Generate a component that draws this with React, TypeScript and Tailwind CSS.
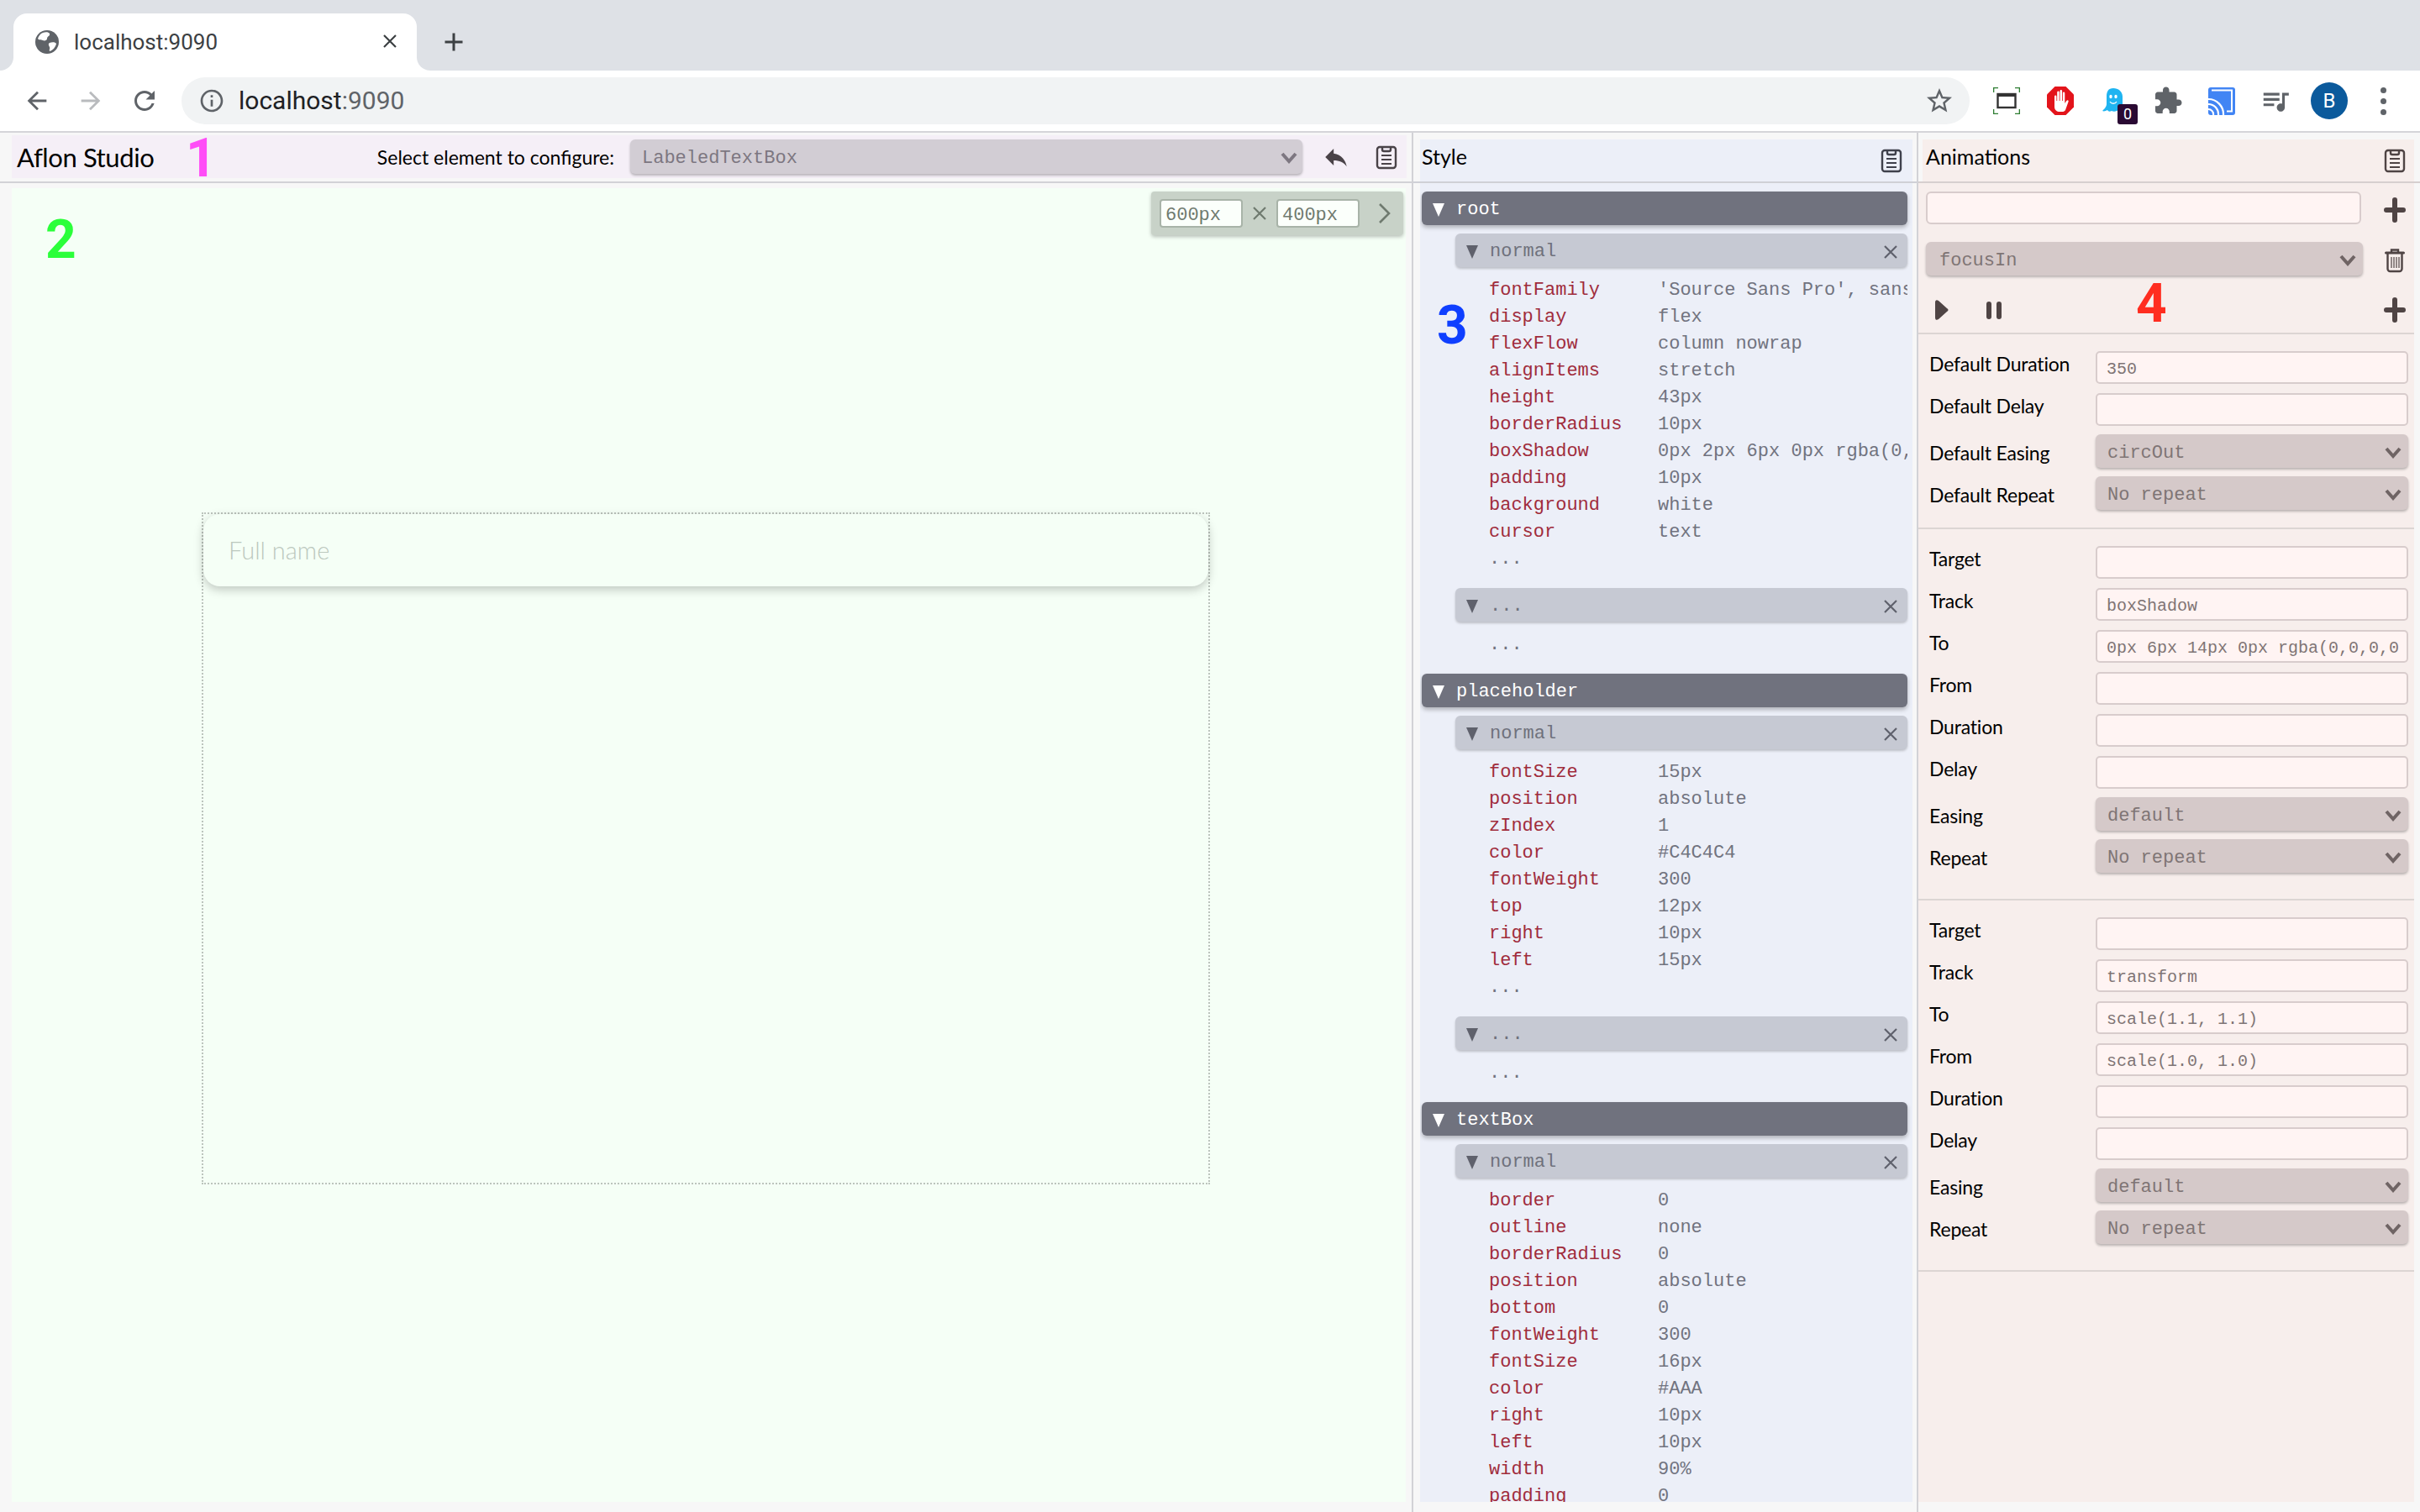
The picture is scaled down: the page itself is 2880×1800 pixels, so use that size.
import type { ReactNode } from 'react';

type Prop = [string, string];

const rootProps: Prop[] = [
    ['fontFamily', "'Source Sans Pro', sans-serif"],
    ['display', 'flex'],
    ['flexFlow', 'column nowrap'],
    ['alignItems', 'stretch'],
    ['height', '43px'],
    ['borderRadius', '10px'],
    ['boxShadow', '0px 2px 6px 0px rgba(0,0,0,0.3)'],
    ['padding', '10px'],
    ['background', 'white'],
    ['cursor', 'text'],
    ['...', ''],
];

const placeholderProps: Prop[] = [
    ['fontSize', '15px'],
    ['position', 'absolute'],
    ['zIndex', '1'],
    ['color', '#C4C4C4'],
    ['fontWeight', '300'],
    ['top', '12px'],
    ['right', '10px'],
    ['left', '15px'],
    ['...', ''],
];

const textBoxProps: Prop[] = [
    ['border', '0'],
    ['outline', 'none'],
    ['borderRadius', '0'],
    ['position', 'absolute'],
    ['bottom', '0'],
    ['fontWeight', '300'],
    ['fontSize', '16px'],
    ['color', '#AAA'],
    ['right', '10px'],
    ['left', '10px'],
    ['width', '90%'],
    ['padding', '0'],
];

type Field = { label: string; value?: string; select?: boolean };

const defaultsFields: Field[] = [
    { label: 'Default Duration', value: '350' },
    { label: 'Default Delay' },
    { label: 'Default Easing', value: 'circOut', select: true },
    { label: 'Default Repeat', value: 'No repeat', select: true },
];

const shadowFields: Field[] = [
    { label: 'Target' },
    { label: 'Track', value: 'boxShadow' },
    { label: 'To', value: '0px 6px 14px 0px rgba(0,0,0,0.3)' },
    { label: 'From' },
    { label: 'Duration' },
    { label: 'Delay' },
    { label: 'Easing', value: 'default', select: true },
    { label: 'Repeat', value: 'No repeat', select: true },
];

const scaleFields: Field[] = [
    { label: 'Target' },
    { label: 'Track', value: 'transform' },
    { label: 'To', value: 'scale(1.1, 1.1)' },
    { label: 'From', value: 'scale(1.0, 1.0)' },
    { label: 'Duration' },
    { label: 'Delay' },
    { label: 'Easing', value: 'default', select: true },
    { label: 'Repeat', value: 'No repeat', select: true },
];

function Material({ d, size = 28, className = '' }: { d: string; size?: number; className?: string }) {
    return (
        <svg width={size} height={size} viewBox="0 0 24 24" fill="currentColor" className={className}>
            <path d={d} />
        </svg>
    );
}

function ToolbarSlot({ children }: { children: ReactNode }) {
    return <div className="relative flex h-[56px] w-[64px] shrink-0 items-center justify-center">{children}</div>;
}

function ClipboardIcon({ color }: { color: string }) {
    return (
        <svg width="26" height="30" viewBox="0 0 26 30" fill="none" stroke={color} strokeWidth="2.4">
            <rect x="2" y="3" width="22" height="25" rx="3" />
            <path d="M8 3v3a2 2 0 0 0 2 2h6a2 2 0 0 0 2-2V3" />
            <path d="M7 13h12M7 18h12M7 23h12" strokeWidth="2" />
        </svg>
    );
}

function PlusIcon() {
    return (
        <svg width="26" height="30" viewBox="0 0 26 30" fill="none" stroke="#4f4444" strokeWidth="6" strokeLinecap="round">
            <path d="M13 3v24M3 15h20" />
        </svg>
    );
}

function TrashIcon() {
    return (
        <svg width="24" height="30" viewBox="0 0 24 30" fill="none" stroke="#4f4444" strokeWidth="2.4">
            <path d="M8 5V2.5h8V5" />
            <path d="M1.5 6h21" strokeWidth="3" strokeLinecap="round" />
            <path d="M3.5 7v18a3 3 0 0 0 3 3h11a3 3 0 0 0 3-3V7" />
            <path d="M8 11v13M11 11v13M14 11v13M17 11v13" strokeWidth="1.2" />
        </svg>
    );
}

function Chevron({ color }: { color: string }) {
    return (
        <svg width="20" height="14" viewBox="0 0 20 14" fill="none" stroke={color} strokeWidth="4">
            <path d="M2 2l8 9 8-9" />
        </svg>
    );
}

function Triangle({ color }: { color: string }) {
    return (
        <svg width="14" height="16" viewBox="0 0 14 16" fill={color}>
            <path d="M0 0h14L7 16z" />
        </svg>
    );
}

function CloseIcon({ color, size = 16 }: { color: string; size?: number }) {
    return (
        <svg width={size} height={size} viewBox="0 0 16 16" fill="none" stroke={color} strokeWidth="2.2">
            <path d="M1 1l14 14M15 1L1 15" />
        </svg>
    );
}

function BrowserChrome() {
    return (
        <div className="font-[Roboto,sans-serif]">
            <div className="flex h-[84px] bg-[#dee1e6] pl-4 pt-4">
                <div className="relative flex h-[68px] w-[480px] items-center rounded-t-2xl bg-white pl-[26px] text-[#3c4043]">
                    <div className="absolute -left-4 bottom-0 h-4 w-4 bg-white">
                        <div className="h-4 w-4 rounded-br-2xl bg-[#dee1e6]" />
                    </div>
                    <div className="absolute -right-4 bottom-0 h-4 w-4 bg-white">
                        <div className="h-4 w-4 rounded-bl-2xl bg-[#dee1e6]" />
                    </div>
                    <svg width="28" height="28" viewBox="0 0 28 28">
                        <circle cx="14" cy="14" r="14" fill="#5f6368" />
                        <path d="M9 3c3-1 7-1 8 1 1 3-3 3-3 6 0 2-3 3-5 2-2-1-5 0-6-2 1-3 3-6 6-7zM17 15c3-1 7-1 8 1-1 4-4 8-8 9-1-2 1-3 0-5-1-2-2-4 0-5z" fill="#fff" />
                    </svg>
                    <span className="ml-[18px] text-[26px] leading-none">localhost:9090</span>
                    <div className="absolute right-[24px] top-[25px]">
                        <CloseIcon color="#3c4043" size={16} />
                    </div>
                </div>
                <div className="ml-4 flex h-[68px] w-[56px] items-center justify-center text-[#3c4043]">
                    <Material size={36} d="M19 13h-6v6h-2v-6H5v-2h6V5h2v6h6v2z" />
                </div>
            </div>
            <div className="flex h-[72px] items-center bg-white pl-[12px]">
                <ToolbarSlot>
                    <Material size={34} className="text-[#5f6368]" d="M20 11H7.83l5.59-5.59L12 4l-8 8 8 8 1.41-1.41L7.83 13H20v-2z" />
                </ToolbarSlot>
                <ToolbarSlot>
                    <Material size={34} className="text-[#b9bbbe]" d="M12 4l-1.41 1.41L16.17 11H4v2h12.17l-5.58 5.59L12 20l8-8z" />
                </ToolbarSlot>
                <ToolbarSlot>
                    <Material size={36} className="text-[#5f6368]" d="M17.65 6.35C16.2 4.9 14.21 4 12 4c-4.42 0-7.99 3.58-7.99 8s3.57 8 7.99 8c3.73 0 6.84-2.55 7.73-6h-2.08c-.82 2.33-3.04 4-5.65 4-3.31 0-6-2.69-6-6s2.69-6 6-6c1.66 0 3.14.69 4.22 1.78L13 11h7V4l-2.35 2.35z" />
                </ToolbarSlot>
                <div className="ml-[12px] flex h-[56px] w-[2128px] shrink-0 items-center rounded-full bg-[#f1f3f4] pl-[20px] pr-[18px]">
                    <Material size={32} className="text-[#5f6368]" d="M11 7h2v2h-2zm0 4h2v6h-2zm1-9C6.48 2 2 6.48 2 12s4.48 10 10 10 10-4.48 10-10S17.52 2 12 2zm0 18c-4.41 0-8-3.59-8-8s3.59-8 8-8 8 3.59 8 8-3.59 8-8 8z" />
                    <span className="ml-[16px] text-[30px] leading-none text-[#202124]">
                        localhost<span className="text-[#5f6368]">:9090</span>
                    </span>
                    <Material size={36} className="ml-auto text-[#5f6368]" d="M22 9.24l-7.19-.62L12 2 9.19 8.63 2 9.24l5.46 4.73L5.82 21 12 17.27 18.18 21l-1.63-7.03L22 9.24zM12 15.4l-3.76 2.27 1-4.28-3.32-2.88 4.38-.38L12 6.1l1.71 4.04 4.38.38-3.32 2.88 1 4.28L12 15.4z" />
                </div>
                <div className="ml-[12px] flex">
                    <ToolbarSlot>
                        <svg width="32" height="32" viewBox="0 0 32 32" fill="none">
                            <path d="M0 6V0h6M26 0h6v6M32 26v6h-6M6 32H0v-6" stroke="#2e7d32" strokeWidth="2.6" />
                            <rect x="5.5" y="8" width="21" height="16" stroke="#333" strokeWidth="2.4" />
                            <path d="M5 9h22" stroke="#333" strokeWidth="4" />
                        </svg>
                    </ToolbarSlot>
                    <ToolbarSlot>
                        <svg width="32" height="34" viewBox="0 0 32 34">
                            <path d="M9.5 0h13L32 9.500v15L22.500 34h-13L0 24.500v-15z" fill="#e3141b" />
                            <path d="M9 12c0-2 2.400-2 2.400 0v5h.8V7c0-2 2.500-2 2.500 0v10h.8V5.500c0-2 2.600-2 2.600 0V17h.8V8c0-2 2.400-2 2.400 0v12l2-3c1.200-1.600 3-.5 2.200 1.200L22 28c-1 1.600-2 2-4 2h-3c-3 0-6-2-6-6z" fill="#fff" />
                        </svg>
                    </ToolbarSlot>
                    <ToolbarSlot>
                        <svg width="24" height="30" viewBox="0 0 24 30" className="-translate-x-[2px]">
                            <path d="M13 0C7 0 5 4 5 10v9c0 3-3 6-5 8 2 1 4 0 6-1 1 2 3 2 5 1 2 1 4 1 6 0l7-3V10C24 4 19 0 13 0z" fill="#1fb4f1" />
                            <ellipse cx="10" cy="10" rx="1.700" ry="2.300" fill="#fff" />
                            <ellipse cx="16" cy="10" rx="1.700" ry="2.300" fill="#fff" />
                            <path d="M9 16c2 3 6 3 8 0" stroke="#fff" strokeWidth="1.300" fill="none" />
                        </svg>
                        <div className="absolute left-[36px] top-[32px] flex h-[24px] w-[24px] items-center justify-center rounded-[3px] bg-[#2a0a33] text-[18px] leading-none text-white">
                            0
                        </div>
                    </ToolbarSlot>
                    <ToolbarSlot>
                        <Material size={36} className="text-[#5f6368]" d="M20.5 11H19V7c0-1.100-.9-2-2-2h-4V3.500C13 2.120 11.880 1 10.500 1S8 2.120 8 3.500V5H4c-1.100 0-1.990.9-1.990 2v3.800H3.500c1.490 0 2.700 1.210 2.700 2.700s-1.210 2.700-2.700 2.700H2V20c0 1.100.9 2 2 2h3.800v-1.500c0-1.490 1.210-2.700 2.700-2.700 1.490 0 2.700 1.210 2.700 2.700V22H17c1.100 0 2-.9 2-2v-4h1.500c1.380 0 2.500-1.120 2.500-2.500S21.880 11 20.500 11z" />
                    </ToolbarSlot>
                    <ToolbarSlot>
                        <svg width="32" height="34" viewBox="0 0 32 34">
                            <rect y="1" width="32" height="33" rx="3" fill="#4285f4" />
                            <path d="M0 15a18 18 0 0 1 18 19M0 21a12 12 0 0 1 12 13M0 27a6 6 0 0 1 6 7" fill="none" stroke="#fff" strokeWidth="2.200" />
                            <path d="M4 4.500h24v25H22" fill="none" stroke="#fff" strokeWidth="2" />
                        </svg>
                    </ToolbarSlot>
                    <ToolbarSlot>
                        <Material size={38} className="text-[#5f6368]" d="M15 6H3v2h12V6zm0 4H3v2h12v-2zM3 16h8v-2H3v2zM17 6v8.180c-.31-.11-.65-.18-1-.18-1.660 0-3 1.340-3 3s1.340 3 3 3 3-1.340 3-3V8h3V6h-5z" />
                    </ToolbarSlot>
                    <ToolbarSlot>
                        <div className="flex h-[44px] w-[44px] items-center justify-center rounded-full bg-[#0b5a9c] text-[24px] text-white">
                            B
                        </div>
                    </ToolbarSlot>
                    <ToolbarSlot>
                        <div className="flex flex-col gap-[6px]">
                            <div className="h-[7px] w-[7px] rounded-full bg-[#5f6368]" />
                            <div className="h-[7px] w-[7px] rounded-full bg-[#5f6368]" />
                            <div className="h-[7px] w-[7px] rounded-full bg-[#5f6368]" />
                        </div>
                    </ToolbarSlot>
                </div>
            </div>
        </div>
    );
}

function HeaderBar() {
    return (
        <div className="h-[60px] border-b-2 border-[#d2d2d6] pb-[4px] pl-[14px] pr-[6px] pt-[3px]">
            <div className="relative flex h-[51px] items-center bg-[#f5eff7] pl-[6px]">
                <span className="pt-[2px] text-[31px] leading-none tracking-[-0.4px] text-black">Aflon Studio</span>
                <span className="absolute left-[207px] top-[-12px] font-[Roboto,sans-serif] text-[64px] font-bold leading-[80px] text-[#ff4df7]">
                    1
                </span>
                <span className="ml-auto pt-[2px] text-[23px] leading-none text-black">Select element to configure:</span>
                <div className="ml-[19px] flex h-[41px] w-[800px] items-center justify-between rounded-[6px] bg-[#d2cdd4] pl-[14px] pr-[6px] pt-[3px] font-['Liberation_Mono',monospace] text-[22px] text-[#7d7781] shadow-[0_2px_3px_rgba(0,0,0,0.25)]">
                    LabeledTextBox
                    <Chevron color="#7d7781" />
                </div>
                <div className="flex w-[64px] justify-center pl-[16px] text-[#4a4348]">
                    <Material size={34} d="M10 9V5l-7 7 7 7v-4.100c5 0 8.500 1.600 11 5.100-1-5-4-10-11-11z" />
                </div>
                <div className="flex w-[60px] justify-center pl-[12px]">
                    <ClipboardIcon color="#4a4348" />
                </div>
            </div>
        </div>
    );
}

function Canvas() {
    return (
        <div className="mb-[12px] ml-[14px] mr-[7px] mt-[6px] flex flex-1 flex-col overflow-hidden bg-[#f5fff6] pt-[4px]">
            <div className="relative ml-auto mr-[3px] flex h-[52px] w-[300px] items-center rounded-[4px] bg-[#c8d2c8] pl-[10px] font-['Liberation_Mono',monospace] text-[22px] text-[#6f7a6f] shadow-[0_2px_4px_rgba(0,0,0,0.25)]">
                <div className="flex h-[34px] w-[99px] items-center rounded-[4px] border-2 border-[#a8b3a8] bg-[#fbfffb] pl-[5px] pt-[4px]">600px</div>
                <div className="flex w-[40px] justify-center">
                    <CloseIcon color="#6f7a6f" size={16} />
                </div>
                <div className="flex h-[34px] w-[99px] items-center rounded-[4px] border-2 border-[#a8b3a8] bg-[#fbfffb] pl-[5px] pt-[4px]">400px</div>
                <svg width="16" height="26" viewBox="0 0 16 26" fill="none" stroke="#6f7a6f" strokeWidth="2.6" className="ml-[22px]">
                    <path d="M2 2l11 11L2 24" />
                </svg>
            </div>
            <div className="relative ml-[226px] mt-[330px] h-[800px] w-[1200px] border-2 border-dotted border-[#bcc4bd]">
                <div className="flex h-[86px] items-center rounded-[20px] bg-[#f5fff6] pl-[30px] text-[29px] font-light text-[#bcc8be] shadow-[0_4px_12px_rgba(0,0,0,0.22)]">
                    Full name
                </div>
            </div>
        </div>
    );
}

function GroupRow({ name, dark, closable, className = '' }: { name: string; dark?: boolean; closable?: boolean; className?: string }) {
    return (
        <div
            className={
                (dark
                    ? 'bg-[#70727e] pl-[13px] text-white shadow-[0_3px_5px_rgba(0,0,0,0.25)] '
                    : 'ml-[40px] bg-[#c6c9d3] pl-[13px] text-[#6f717c] shadow-[0_2px_3px_rgba(0,0,0,0.2)] ') +
                'flex h-[40px] items-center rounded-[6px] pr-[12px] pt-[3px] ' +
                className
            }
        >
            <Triangle color={dark ? '#ffffff' : '#5f616c'} />
            <span className="ml-[14px]">{name}</span>
            {closable && (
                <div className="ml-auto">
                    <CloseIcon color="#5f616c" />
                </div>
            )}
        </div>
    );
}

function PropRows({ rows }: { rows: Prop[] }) {
    return (
        <div className="pl-[80px] pt-[10px]">
            {rows.map(([key, value], i) => (
                <div key={i} className="flex h-[32px] items-center whitespace-nowrap pt-[3px]">
                    <span className={key === '...' ? 'w-[201px] shrink-0 text-[#71737f]' : 'w-[201px] shrink-0 text-[#a02c3c]'}>{key}</span>
                    <span className="overflow-hidden text-[#71737f]">{value}</span>
                </div>
            ))}
        </div>
    );
}

function StyleGroup({ name, rows, className = '' }: { name: string; rows: Prop[]; className?: string }) {
    return (
        <div className={className}>
            <GroupRow name={name} dark />
            <GroupRow name="normal" closable className="mt-[10px]" />
            <PropRows rows={rows} />
            <GroupRow name="..." closable className="mt-[20px]" />
            <PropRows rows={[['...', '']]} />
        </div>
    );
}

function StylePanel() {
    return (
        <div className="flex h-full w-[601px] shrink-0 flex-col border-r-2 border-[#d2d2d6]">
            <div className="h-[60px] shrink-0 border-b-2 border-[#cfd0d6] pl-[8px] pr-[5px] pt-[8px]">
                <div className="flex h-[50px] items-center justify-between bg-[#eceff8] pl-[2px] pr-[12px]">
                    <span className="pb-[10px] text-[25px] leading-none text-black">Style</span>
                    <ClipboardIcon color="#3f414c" />
                </div>
            </div>
            <div className="mb-[12px] ml-[8px] mr-[5px] flex-1 overflow-hidden bg-[#eceff8] pl-[2px] pr-[6px] pt-[10px] font-['Liberation_Mono',monospace] text-[22px]">
                <div className="relative">
                    <StyleGroup name="root" rows={rootProps} />
                    <span className="absolute left-[18px] top-[120px] font-[Roboto,sans-serif] text-[64px] font-bold leading-[80px] text-[#0f3fff]">
                        3
                    </span>
                </div>
                <StyleGroup name="placeholder" rows={placeholderProps} className="mt-[20px]" />
                <div className="mt-[20px]">
                    <GroupRow name="textBox" dark />
                    <GroupRow name="normal" closable className="mt-[10px]" />
                    <PropRows rows={textBoxProps} />
                </div>
            </div>
        </div>
    );
}

function FieldRow({ field }: { field: Field }) {
    return (
        <div className={field.select ? 'mb-[11px] -mt-px flex items-center' : 'mb-[11px] flex items-center'}>
            <span className={(field.select ? 'pt-[4px] ' : 'pb-[8px] ') + 'w-[198px] shrink-0 text-[23px] leading-none tracking-[-0.2px] text-black'}>
                {field.label}
            </span>
            {field.select ? (
                <div className="flex h-[40px] w-[372px] items-center justify-between rounded-[6px] bg-[#d5c9c9] pl-[14px] pr-[8px] pt-[4px] font-['Liberation_Mono',monospace] text-[22px] text-[#7f7575] shadow-[0_2px_3px_rgba(0,0,0,0.25)]">
                    {field.value}
                    <Chevron color="#6f6464" />
                </div>
            ) : (
                <div className="flex h-[39px] w-[372px] items-center rounded-[5px] border-2 border-[#d8cccc] bg-[#fff4f3] pl-[11px] pt-[5px] font-['Liberation_Mono',monospace] text-[20px] text-[#7f7575]">
                    <div className="w-[348px] overflow-hidden whitespace-nowrap">{field.value}</div>
                </div>
            )}
        </div>
    );
}

function AnimationSection({ fields, bottom }: { fields: Field[]; bottom: string }) {
    return (
        <div className={'border-b-2 border-[#dcd5d3] pl-[13px] pt-[20px] ' + bottom}>
            {fields.map((field, i) => (
                <FieldRow key={i} field={field} />
            ))}
        </div>
    );
}

function AnimationsPanel() {
    return (
        <div className="flex h-full flex-1 flex-col">
            <div className="h-[60px] shrink-0 border-b-2 border-[#d6cfcf] pl-[5px] pr-[7px] pt-[8px]">
                <div className="flex h-[50px] items-center justify-between bg-[#f7eeec] pl-[4px] pr-[10px]">
                    <span className="pb-[10px] text-[25px] leading-none text-black">Animations</span>
                    <ClipboardIcon color="#4f4444" />
                </div>
            </div>
            <div className="mb-[12px] mr-[7px] flex-1 overflow-hidden bg-[#f7eeec]">
                <div className="relative border-b-2 border-[#dcd5d3] pb-[13px] pl-[9px] pr-[3px] pt-[10px]">
                    <div className="flex items-center justify-between">
                        <div className="h-[39px] w-[518px] rounded-[6px] border-2 border-[#d8cccc] bg-[#fff4f3]" />
                        <div className="flex w-[40px] translate-y-[2px] justify-center">
                            <PlusIcon />
                        </div>
                    </div>
                    <div className="mt-[21px] flex items-center justify-between">
                        <div className="flex h-[40px] w-[520px] items-center justify-between rounded-[6px] bg-[#d5c9c9] pl-[16px] pr-[8px] pt-[4px] font-['Liberation_Mono',monospace] text-[22px] text-[#7f7575] shadow-[0_2px_3px_rgba(0,0,0,0.25)]">
                            focusIn
                            <Chevron color="#6f6464" />
                        </div>
                        <div className="flex w-[40px] translate-y-[2px] justify-center">
                            <TrashIcon />
                        </div>
                    </div>
                    <div className="mt-[27px] flex h-[28px] items-center">
                        <svg width="16" height="24" viewBox="0 0 16 24" fill="#4f4444" className="ml-[11px]">
                            <path d="M0 3c0-3 2-3.500 4-2l10 9c2 1 2 3 0 4L4 23c-2 1.500-4 1-4-2z" />
                        </svg>
                        <div className="ml-[45px] flex gap-[6px]">
                            <div className="h-[21px] w-[6px] rounded-full bg-[#4f4444]" />
                            <div className="h-[21px] w-[6px] rounded-full bg-[#4f4444]" />
                        </div>
                        <div className="ml-auto flex w-[40px] justify-center">
                            <PlusIcon />
                        </div>
                    </div>
                    <span className="absolute left-[259px] top-[104px] font-[Roboto,sans-serif] text-[64px] font-bold leading-[80px] text-[#ff2d20]">
                        4
                    </span>
                </div>
                <AnimationSection fields={defaultsFields} bottom="pb-[10px]" />
                <AnimationSection fields={shadowFields} bottom="pb-[20px]" />
                <AnimationSection fields={scaleFields} bottom="pb-[20px]" />
            </div>
        </div>
    );
}

export default function App() {
    return (
        <div className="flex h-[1800px] w-[2880px] flex-col overflow-hidden bg-[#f7f7f7] font-[Lato,sans-serif]">
            <BrowserChrome />
            <div className="flex flex-1 overflow-hidden border-t-2 border-[#d5d5d9]">
                <div className="relative flex h-full w-[1682px] shrink-0 flex-col border-r-2 border-[#d2d2d6]">
                    <HeaderBar />
                    <Canvas />
                    <span className="absolute left-[54px] top-[88px] font-[Roboto,sans-serif] text-[64px] font-bold leading-[80px] text-[#2bff3a]">
                        2
                    </span>
                </div>
                <StylePanel />
                <AnimationsPanel />
            </div>
        </div>
    );
}
